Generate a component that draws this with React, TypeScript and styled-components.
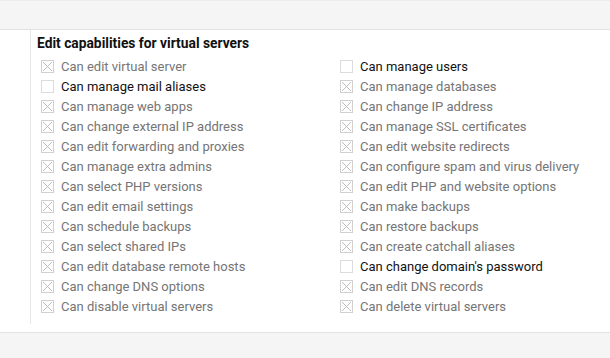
import { createGlobalStyle, styled } from "styled-components";

const GlobalStyle = createGlobalStyle`
  html, body {
    margin: 0;
    padding: 0;
    background: #f5f5f5;
    font-family: Roboto, "Liberation Sans", sans-serif;
  }
`;

type Cap = { label: string; checked: boolean; disabled: boolean };

const left: Cap[] = [
  { label: "Can edit virtual server", checked: true, disabled: true },
  { label: "Can manage mail aliases", checked: false, disabled: false },
  { label: "Can manage web apps", checked: true, disabled: true },
  { label: "Can change external IP address", checked: true, disabled: true },
  { label: "Can edit forwarding and proxies", checked: true, disabled: true },
  { label: "Can manage extra admins", checked: true, disabled: true },
  { label: "Can select PHP versions", checked: true, disabled: true },
  { label: "Can edit email settings", checked: true, disabled: true },
  { label: "Can schedule backups", checked: true, disabled: true },
  { label: "Can select shared IPs", checked: true, disabled: true },
  { label: "Can edit database remote hosts", checked: true, disabled: true },
  { label: "Can change DNS options", checked: true, disabled: true },
  { label: "Can disable virtual servers", checked: true, disabled: true },
];

const right: Cap[] = [
  { label: "Can manage users", checked: false, disabled: false },
  { label: "Can manage databases", checked: true, disabled: true },
  { label: "Can change IP address", checked: true, disabled: true },
  { label: "Can manage SSL certificates", checked: true, disabled: true },
  { label: "Can edit website redirects", checked: true, disabled: true },
  { label: "Can configure spam and virus delivery", checked: true, disabled: true },
  { label: "Can edit PHP and website options", checked: true, disabled: true },
  { label: "Can make backups", checked: true, disabled: true },
  { label: "Can restore backups", checked: true, disabled: true },
  { label: "Can create catchall aliases", checked: true, disabled: true },
  { label: "Can change domain's password", checked: false, disabled: false },
  { label: "Can edit DNS records", checked: true, disabled: true },
  { label: "Can delete virtual servers", checked: true, disabled: true },
];

const CheckBox = ({ checked, disabled }: { checked: boolean; disabled: boolean }) => (
  <Box $disabled={disabled}>
    {checked && (
      <svg width="13" height="13" viewBox="0 0 13 13">
        <path d="M2 2 L11 11 M11 2 L2 11" stroke="#bdbdbd" strokeWidth="1" />
      </svg>
    )}
  </Box>
);

const Column = ({ items }: { items: Cap[] }) => (
  <List>
    {items.map((c) => (
      <Item key={c.label}>
        <CheckBox checked={c.checked} disabled={c.disabled} />
        <Label $disabled={c.disabled}>{c.label}</Label>
      </Item>
    ))}
  </List>
);

export default function App() {
  return (
    <>
      <GlobalStyle />
      <Page>
        <TopBar />
        <Panel>
          <Gutter />
          <Content>
            <Heading>Edit capabilities for virtual servers</Heading>
            <Columns>
              <Column items={left} />
              <Column items={right} />
            </Columns>
          </Content>
        </Panel>
      </Page>
    </>
  );
}

const Page = styled.div`
  width: 610px;
  height: 358px;
  display: flex;
  flex-direction: column;
  background: #f5f5f5;
`;

const TopBar = styled.div`
  height: 28px;
  border-top: 1px solid #ececec;
  border-bottom: 1px solid #e2e2e2;
  background: #f5f5f5;
`;

const Panel = styled.div`
  display: flex;
  background: #fff;
  height: 302px;
  border-bottom: 1px solid #e2e2e2;
`;

const Gutter = styled.div`
  width: 30px;
  height: 294px;
  border-right: 1px solid #e6e6e6;
`;

const Content = styled.div`
  flex: 1;
  padding: 5px 0 0 6px;
`;

const Heading = styled.div`
  font-weight: 700;
  font-size: 13.8px;
  line-height: 16px;
  color: #111;
  margin-bottom: 5px;
`;

const Columns = styled.div`
  display: grid;
  grid-template-columns: 299px 1fr;
  padding-left: 4px;
`;

const List = styled.div`
  display: flex;
  flex-direction: column;
`;

const Item = styled.div`
  display: flex;
  align-items: center;
  gap: 7px;
  height: 20px;
`;

const Box = styled.span<{ $disabled: boolean }>`
  display: inline-flex;
  width: 13px;
  height: 13px;
  box-sizing: border-box;
  border: 1px solid ${(p) => (p.$disabled ? "#d0d0d0" : "#dcdcdc")};
  background: #fff;
  position: relative;

  svg {
    position: absolute;
    left: -1px;
    top: -1px;
  }
`;

const Label = styled.span<{ $disabled: boolean }>`
  font-size: 13px;
  line-height: 15px;
  color: ${(p) => (p.$disabled ? "#757575" : "#111")};
`;
